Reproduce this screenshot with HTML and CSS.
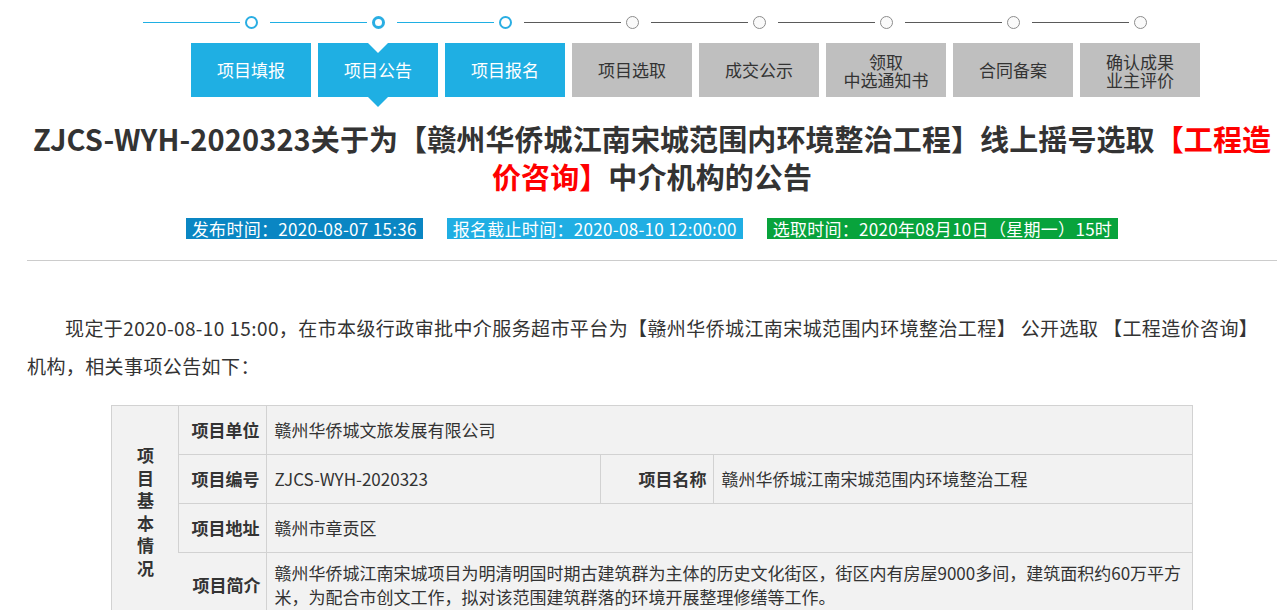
FILE: index.html
```html
<!DOCTYPE html>
<html lang="zh-CN">
<head>
<meta charset="utf-8">
<title>项目公告</title>
<link rel="stylesheet" href="styles.css">
</head>
<body>
<div class="page">
  <div class="steps">
    <div class="step done"><div class="track"><i class="line"></i><i class="dot"></i></div><div class="box">项目填报</div></div>
    <div class="step done current"><div class="track"><i class="line"></i><i class="dot"></i></div><div class="box">项目公告</div></div>
    <div class="step done"><div class="track"><i class="line"></i><i class="dot"></i></div><div class="box">项目报名</div></div>
    <div class="step"><div class="track"><i class="line"></i><i class="dot"></i></div><div class="box">项目选取</div></div>
    <div class="step"><div class="track"><i class="line"></i><i class="dot"></i></div><div class="box">成交公示</div></div>
    <div class="step"><div class="track"><i class="line"></i><i class="dot"></i></div><div class="box two">领取<br>中选通知书</div></div>
    <div class="step"><div class="track"><i class="line"></i><i class="dot"></i></div><div class="box">合同备案</div></div>
    <div class="step"><div class="track"><i class="line"></i><i class="dot"></i></div><div class="box two">确认成果<br>业主评价</div></div>
  </div>

  <h1 class="title">ZJCS-WYH-2020323关于为【赣州华侨城江南宋城范围内环境整治工程】线上摇号选取<span class="red">【工程造<br>价咨询】</span>中介机构的公告</h1>

  <div class="meta">
    <span class="badge b1">发布时间：2020-08-07 15:36</span>
    <span class="badge b2">报名截止时间：2020-08-10 12:00:00</span>
    <span class="badge b3">选取时间：2020年08月10日（星期一）15时</span>
  </div>

  <hr class="rule">

  <p class="lead">现定于2020-08-10 15:00，在市本级行政审批中介服务超市平台为【赣州华侨城江南宋城范围内环境整治工程】 公开选取 【工程造价咨询】<br>机构，相关事项公告如下：</p>

  <table class="info">
    <colgroup>
      <col class="c1"><col class="c2"><col class="c3"><col class="c4"><col class="c5">
    </colgroup>
    <tr class="r">
      <th class="group" rowspan="4"><span class="vt">项目基本情况</span></th>
      <th class="lab">项目单位</th>
      <td class="val" colspan="3">赣州华侨城文旅发展有限公司</td>
    </tr>
    <tr class="r">
      <th class="lab">项目编号</th>
      <td class="val">ZJCS-WYH-2020323</td>
      <th class="lab">项目名称</th>
      <td class="val">赣州华侨城江南宋城范围内环境整治工程</td>
    </tr>
    <tr class="r">
      <th class="lab">项目地址</th>
      <td class="val" colspan="3">赣州市章贡区</td>
    </tr>
    <tr class="r4">
      <th class="lab nol">项目简介</th>
      <td class="val multi" colspan="3">赣州华侨城江南宋城项目为明清明国时期古建筑群为主体的历史文化街区，街区内有房屋9000多间，建筑面积约60万平方<br>米，为配合市创文工作，拟对该范围建筑群落的环境开展整理修缮等工作。</td>
    </tr>
  </table>
</div>
</body>
</html>
```
FILE: styles.css
```css
html, body {
  margin: 0;
  padding: 0;
  background: #fff;
}
body {
  font-family: "Noto Sans CJK SC", "Noto Sans", sans-serif;
  color: #333;
}
.page {
  width: 1250px;
  margin-left: 27px;
}

/* steps */
.steps {
  display: flex;
  gap: 7px;
  margin-left: 164px;
}
.step {
  width: 120px;
  flex: none;
}
.track {
  display: flex;
  align-items: center;
  height: 13px;
  margin: 16px 0 14px -48px;
}
.line {
  display: block;
  width: 97px;
  height: 1px;
  background: #5a5a5a;
  margin-right: 5px;
}
.dot {
  display: block;
  width: 13px;
  height: 13px;
  box-sizing: border-box;
  border-radius: 50%;
  border: 1.5px solid #8c8c8c;
  background: #fafafa;
}
.done .line { background: #1fafe3; }
.done .dot { border: 2px solid #2aaee3; background: #fff; }
.current .dot { border-width: 3px; }

.box {
  position: relative;
  height: 54px;
  display: flex;
  align-items: center;
  justify-content: center;
  text-align: center;
  font-size: 17px;
  line-height: 18px;
  background: #bfbfbf;
  color: #333;
}
.box.two {
  padding-top: 1px;
  box-sizing: border-box;
}
.done .box {
  background: #1fafe3;
  color: #fff;
}
.current .box::before,
.current .box::after {
  content: "";
  position: absolute;
  left: 50%;
  margin-left: -10px;
  width: 0;
  height: 0;
  border-left: 10px solid transparent;
  border-right: 10px solid transparent;
}
.current .box::before {
  top: 0;
  border-top: 10px solid #fff;
}
.current .box::after {
  top: 100%;
  border-top: 10px solid #1fafe3;
}

/* title */
.title {
  margin: 22px 0 0;
  font-size: 29px;
  line-height: 38px;
  font-weight: bold;
  text-align: center;
  color: #333;
  letter-spacing: 0.1px;
}
.red { color: #ff0000; }

.meta {
  display: flex;
  justify-content: center;
  gap: 24px;
  margin-top: 23px;
}
.badge {
  display: block;
  height: 21px;
  line-height: 21px;
  font-size: 17px;
  padding: 0 6px;
  letter-spacing: 0.3px;
  color: #fff;
  white-space: nowrap;
}
.b1 { background: #0a86c3; }
.b2 { background: #20aee3; }
.b3 { background: #08a33c; }

.rule {
  margin: 21px 0 0;
  border: 0;
  border-top: 1px solid #cccccc;
  height: 0;
}

.lead {
  margin: 48px 0 0;
  font-size: 19px;
  line-height: 38px;
  text-indent: 2em;
  letter-spacing: 0.4px;
  color: #333;
}

/* table */
.info {
  margin: 20px auto 0;
  width: 1080px;
  table-layout: fixed;
  border-collapse: collapse;
  background: #f2f2f2;
  font-size: 17px;
  color: #333;
}
.c1 { width: 67px; }
.c2 { width: 88px; }
.c3 { width: 334px; }
.c4 { width: 113px; }
.c5 { width: 478px; }
.info th, .info td {
  border: 1px solid #d2d2d2;
}
.info .r th, .info .r td {
  height: 48px;
  padding: 0 7px;
  line-height: 24px;
}
.info .group {
  border-right: none;
  padding: 0 0 6px;
  text-align: center;
  vertical-align: middle;
}
.vt {
  display: block;
  width: 17px;
  margin: 0 auto;
  font-size: 17px;
  line-height: 22.5px;
  font-weight: bold;
  word-break: break-all;
}
.info .lab {
  text-align: right;
  font-weight: bold;
  padding: 0 6px 0 0;
  white-space: nowrap;
}
.info .val {
  text-align: left;
  font-weight: normal;
}
.info .nol {
  border-left: none;
}
.info .r4 th, .info .r4 td {
  padding-top: 8px;
  padding-bottom: 8px;
  line-height: 24px;
}
.info .r4 .lab { padding-right: 6px; }
.info .r4 .val { padding-left: 7px; padding-right: 7px; }
```
